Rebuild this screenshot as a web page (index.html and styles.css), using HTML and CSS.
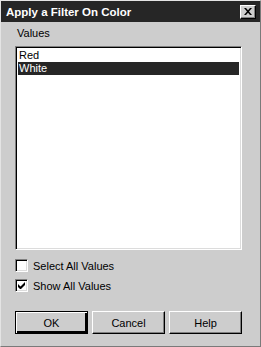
FILE: index.html
```html
<!DOCTYPE html>
<html>
<head>
<meta charset="utf-8">
<link rel="stylesheet" href="styles.css">
</head>
<body>
<div class="window">
  <div class="titlebar">
    <span class="title">Apply a Filter On Color</span>
    <span class="close"><svg width="8" height="7" viewBox="0 0 8 7"><path d="M0 0h2l2 2.2L6 0h2L5 3.5 8 7H6L4 4.8 2 7H0l3-3.5z" fill="#000"/></svg></span>
  </div>
  <div class="content">
    <div class="label">Values</div>
    <div class="list">
      <div class="item">Red</div>
      <div class="item selected">White</div>
    </div>
    <div class="checks">
      <div class="check"><span class="box"></span><span>Select All Values</span></div>
      <div class="check"><span class="box"><svg width="7" height="7" viewBox="0 0 7 7"><path d="M0 2v3l2 2h1L7 3V0L2.5 4.5z" fill="#000"/></svg></span><span>Show All Values</span></div>
    </div>
    <div class="buttons">
      <div class="btn default">OK</div>
      <div class="btn">Cancel</div>
      <div class="btn">Help</div>
    </div>
  </div>
</div>
</body>
</html>
```

FILE: styles.css
```css
html, body {
  margin: 0;
  padding: 0;
  background: #cdcdcd;
}
.window {
  box-sizing: border-box;
  width: 261px;
  height: 347px;
  background: #cdcdcd;
  border-top: 1px solid #e4e4e4;
  border-left: 1px solid #e4e4e4;
  border-right: 1px solid #7a7a7a;
  border-bottom: 1px solid #7a7a7a;
  font-family: "Liberation Sans", Arial, sans-serif;
  font-size: 11px;
  color: #000;
}
.titlebar {
  height: 21px;
  background: #262626;
  display: flex;
  align-items: center;
  justify-content: space-between;
  padding: 0 4px 0 5px;
}
.title {
  color: #fff;
  font-weight: bold;
  font-size: 11.5px;
}
.close {
  box-sizing: border-box;
  width: 16px;
  height: 14px;
  background: #cdcdcd;
  border-top: 1px solid #fff;
  border-left: 1px solid #fff;
  border-right: 1px solid #000;
  border-bottom: 1px solid #000;
  box-shadow: inset -1px -1px 0 #808080;
  display: flex;
  align-items: center;
  justify-content: center;
}
.content {
  padding: 0 18px 0 14px;
}
.label {
  margin-top: 5px;
  padding-left: 2px;
  line-height: 13px;
}
.list {
  box-sizing: border-box;
  margin-top: 6px;
  height: 204px;
  background: #fff;
  border-top: 1px solid #808080;
  border-left: 1px solid #808080;
  border-right: 1px solid #fff;
  border-bottom: 1px solid #fff;
  box-shadow: inset 1px 1px 0 #000, inset -1px -1px 0 #dcdcdc;
  padding: 2px 2px;
}
.item {
  height: 13px;
  line-height: 13px;
  padding-left: 1px;
}
.item.selected {
  background: #262626;
  color: #fff;
}
.checks {
  margin-top: 9px;
  display: flex;
  flex-direction: column;
  gap: 7px;
}
.check {
  display: flex;
  align-items: center;
  gap: 5px;
  height: 13px;
}
.box {
  box-sizing: border-box;
  width: 13px;
  height: 13px;
  background: #fff;
  border-top: 1px solid #808080;
  border-left: 1px solid #808080;
  border-right: 1px solid #fff;
  border-bottom: 1px solid #fff;
  box-shadow: inset 1px 1px 0 #000, inset -1px -1px 0 #dcdcdc;
  display: flex;
  align-items: center;
  justify-content: center;
}
.buttons {
  margin-top: 19px;
  display: flex;
  gap: 4px;
}
.btn {
  box-sizing: border-box;
  flex: 1;
  height: 23px;
  display: flex;
  align-items: center;
  justify-content: center;
  border-top: 1px solid #fff;
  border-left: 1px solid #fff;
  border-right: 1px solid #000;
  border-bottom: 1px solid #000;
  box-shadow: inset -1px -1px 0 #808080;
}
.btn.default {
  border: 1px solid #000;
  box-shadow: inset 1px 1px 0 #fff, inset -2px -2px 0 #000;
}
```
